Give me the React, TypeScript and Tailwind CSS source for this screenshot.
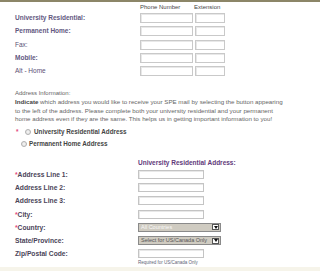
import React from "react";

const phoneRows = [
  { label: "University Residential:", bold: true },
  { label: "Permanent Home:", bold: true },
  { label: "Fax:", bold: false },
  { label: "Mobile:", bold: true },
  { label: "Alt - Home", bold: false },
];

function Box({ wide }: { wide?: boolean }) {
  return (
    <div
      className={
        wide
          ? "w-[66px] h-[9px] border border-[#c4c4c4] bg-white shadow-[inset_1px_1px_0_#e8e8e8]"
          : "h-[10px] border border-[#c9c9c9] bg-white shadow-[inset_1px_1px_0_#e8e8e8]"
      }
    />
  );
}

function Select({ text, light }: { text: string; light?: boolean }) {
  return (
    <div className="w-[83px] h-[9px] border border-[#8a8a8a] bg-[#cfcbc1] flex items-center justify-between pl-[2px] pr-[1px] font-normal">
      <span className={light ? "text-[5.5px] leading-none text-[#f8f8f8]" : "text-[5.5px] leading-none text-[#555]"}>{text}</span>
      <span className="w-[7px] h-[6px] bg-white border border-[#555] flex items-center justify-center">
        <svg width="4" height="3" viewBox="0 0 4 3">
          <path d="M0 0h4L2 3z" fill="#111" />
        </svg>
      </span>
    </div>
  );
}

function Radio() {
  return <span className="inline-block w-[6px] h-[6px] rounded-full border border-[#b0b0b0] bg-[#f2f2f2] shadow-[inset_0_0_1px_#ccc]" />;
}

function Req() {
  return <span className="text-[#e2457a]">*</span>;
}

export default function App() {
  return (
    <div className="w-[320px] h-[271px] overflow-hidden bg-white border-t-2 border-[#8c8668] flex flex-col font-['Liberation_Sans',Arial,sans-serif]">
      {/* phone numbers */}
      <div className="grid grid-cols-[138px_55px_30px] h-[11px] items-center text-[6px] text-[#444]">
        <div />
        <div className="pl-[2px]">Phone Number</div>
        <div className="pl-[1px]">Extension</div>
      </div>
      <div className="flex flex-col gap-[3.3px]">
        {phoneRows.map((r) => (
          <div key={r.label} className="grid grid-cols-[138px_53px_30px] gap-x-[2px] items-center">
            <div
              className={
                r.bold
                  ? "pl-[15px] text-[6.5px] font-bold text-[#62587f]"
                  : "pl-[15px] text-[6.5px] text-[#5a5075]"
              }
            >
              {r.label}
            </div>
            <Box />
            <Box />
          </div>
        ))}
      </div>

      {/* address information */}
      <div className="pl-[15px] mt-[13px] text-[6px] leading-[8px] text-[#666]">Address Information:</div>
      <p className="pl-[15px] mt-[1px] text-[6.2px] leading-[8.5px] text-[#666] whitespace-nowrap">
        <b className="text-[#444]">Indicate</b> which address you would like to receive your SPE mail by selecting the button appearing
        <br />
        to the left of the address. Please complete both your university residential and your permanent
        <br />
        home address even if they are the same. This helps us in getting important information to you!
      </p>
      <div className="flex items-center gap-[3px] pl-[16px] mt-[3px] h-[10px] text-[6.3px] font-bold text-[#444]">
        <span className="text-[#e2457a] w-[6px]">*</span>
        <Radio />
        <span>University Residential Address</span>
      </div>
      <div className="flex items-center gap-[2px] pl-[21px] mt-[2px] h-[10px] text-[6.3px] font-bold text-[#444]">
        <Radio />
        <span>Permanent Home Address</span>
      </div>

      {/* address form */}
      <div className="pl-[138px] mt-[10px] text-[6.5px] font-bold text-[#5f3a7a] leading-[8px]">
        University Residential Address:
      </div>
      <div className="flex flex-col gap-[4.3px] mt-[3px] text-[6.7px] leading-[9px] font-bold text-[#4a4458]">
        <div className="grid grid-cols-[138px_1fr] items-center">
          <div className="pl-[15px]"><Req />Address Line 1:</div>
          <Box wide />
        </div>
        <div className="grid grid-cols-[138px_1fr] items-center">
          <div className="pl-[15px]">Address Line 2:</div>
          <Box wide />
        </div>
        <div className="grid grid-cols-[138px_1fr] items-center">
          <div className="pl-[15px]">Address Line 3:</div>
          <Box wide />
        </div>
        <div className="grid grid-cols-[138px_1fr] items-center">
          <div className="pl-[15px]"><Req />City:</div>
          <Box wide />
        </div>
        <div className="grid grid-cols-[138px_1fr] items-center">
          <div className="pl-[15px]"><Req />Country:</div>
          <Select text="All Countries" light />
        </div>
        <div className="grid grid-cols-[138px_1fr] items-center">
          <div className="pl-[15px]">State/Province:</div>
          <Select text="Select for US/Canada Only" />
        </div>
        <div className="grid grid-cols-[138px_1fr] items-start">
          <div className="pl-[15px]">Zip/Postal Code:</div>
          <div className="flex flex-col">
            <Box wide />
            <span className="mt-[1px] text-[4.5px] font-normal text-[#5d6477] leading-[7px]">Required for US/Canada Only</span>
          </div>
        </div>
      </div>
      <div className="mt-auto h-[4px] bg-[#f6f4ea]" />
    </div>
  );
}
